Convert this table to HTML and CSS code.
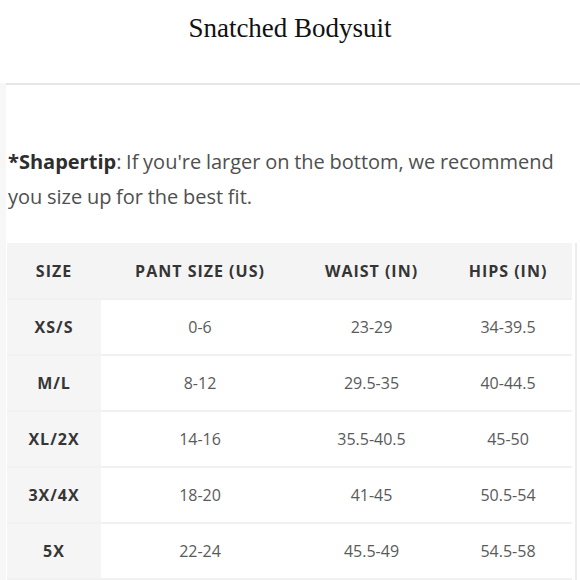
FILE: index.html
```html
<!DOCTYPE html>
<html lang="en">
<head>
<meta charset="utf-8">
<title>Snatched Bodysuit</title>
<link rel="stylesheet" href="styles.css">
</head>
<body>
<header class="title-bar">
  <h1 class="title">Snatched Bodysuit</h1>
</header>
<main class="content">
  <div class="divider"></div>
  <p class="tip"><strong>*Shapertip</strong>: If you're larger on the bottom, we recommend you size up for the best fit.</p>
  <div class="table-wrap">
    <table class="size-table">
      <colgroup>
        <col class="c1"><col class="c2"><col class="c3"><col class="c4">
      </colgroup>
      <thead>
        <tr><th>SIZE</th><th>PANT SIZE (US)</th><th>WAIST (IN)</th><th>HIPS (IN)</th></tr>
      </thead>
      <tbody>
        <tr><th>XS/S</th><td>0-6</td><td>23-29</td><td>34-39.5</td></tr>
        <tr><th>M/L</th><td>8-12</td><td>29.5-35</td><td>40-44.5</td></tr>
        <tr><th>XL/2X</th><td>14-16</td><td>35.5-40.5</td><td>45-50</td></tr>
        <tr><th>3X/4X</th><td>18-20</td><td>41-45</td><td>50.5-54</td></tr>
        <tr><th>5X</th><td>22-24</td><td>45.5-49</td><td>54.5-58</td></tr>
      </tbody>
    </table>
  </div>
</main>
</body>
</html>
```
FILE: styles.css
```css
html, body {
  margin: 0;
  padding: 0;
  background: #ffffff;
}
body {
  width: 580px;
  height: 580px;
  overflow: hidden;
}
.title-bar {
  height: 46px;
  display: flex;
  justify-content: center;
}
.title {
  margin: 0;
  padding-top: 12px;
  font-family: "Liberation Serif", "DejaVu Serif", serif;
  font-weight: normal;
  font-size: 27px;
  line-height: 32px;
  color: #111111;
}
.content {
  border-left: 6px solid #f7f7f7;
  min-height: 534px;
}
.divider {
  margin-top: 37px;
  height: 2px;
  background: #e6e6e6;
}
.tip {
  margin: 59px 0 0 2px;
  font-family: "Open Sans", "Noto Sans", sans-serif;
  font-size: 20px;
  word-spacing: -0.5px;
  line-height: 35px;
  color: #4f4f4f;
  width: 560px;
}
.tip strong {
  color: #2e2e2e;
  font-weight: 700;
}
.table-wrap {
  margin: 29px 0 0 1px;
  width: 568px;
  border-right: 2px solid #ececec;
}
.size-table {
  width: 565px;
  border-collapse: collapse;
  table-layout: fixed;
  font-family: "Open Sans", "Noto Sans", sans-serif;
}
.c1 { width: 94px; }
.c2 { width: 198px; }
.c3 { width: 145px; }
.c4 { width: 128px; }
.size-table th,
.size-table td {
  height: 54px;
  padding: 0;
  text-align: center;
  vertical-align: middle;
  border-bottom: 2px solid #f1f1f1;
}
.size-table thead th {
  background: #f4f4f4;
  font-size: 16px;
  font-weight: 700;
  letter-spacing: 1px;
  color: #353535;
  height: 55px;
}
.size-table tbody th {
  background: #f5f5f5;
  font-size: 16px;
  font-weight: 700;
  letter-spacing: 1px;
  color: #363636;
}
.size-table tbody td {
  font-size: 16px;
  font-weight: 400;
  color: #5a5a5a;
  background: #ffffff;
}
```
